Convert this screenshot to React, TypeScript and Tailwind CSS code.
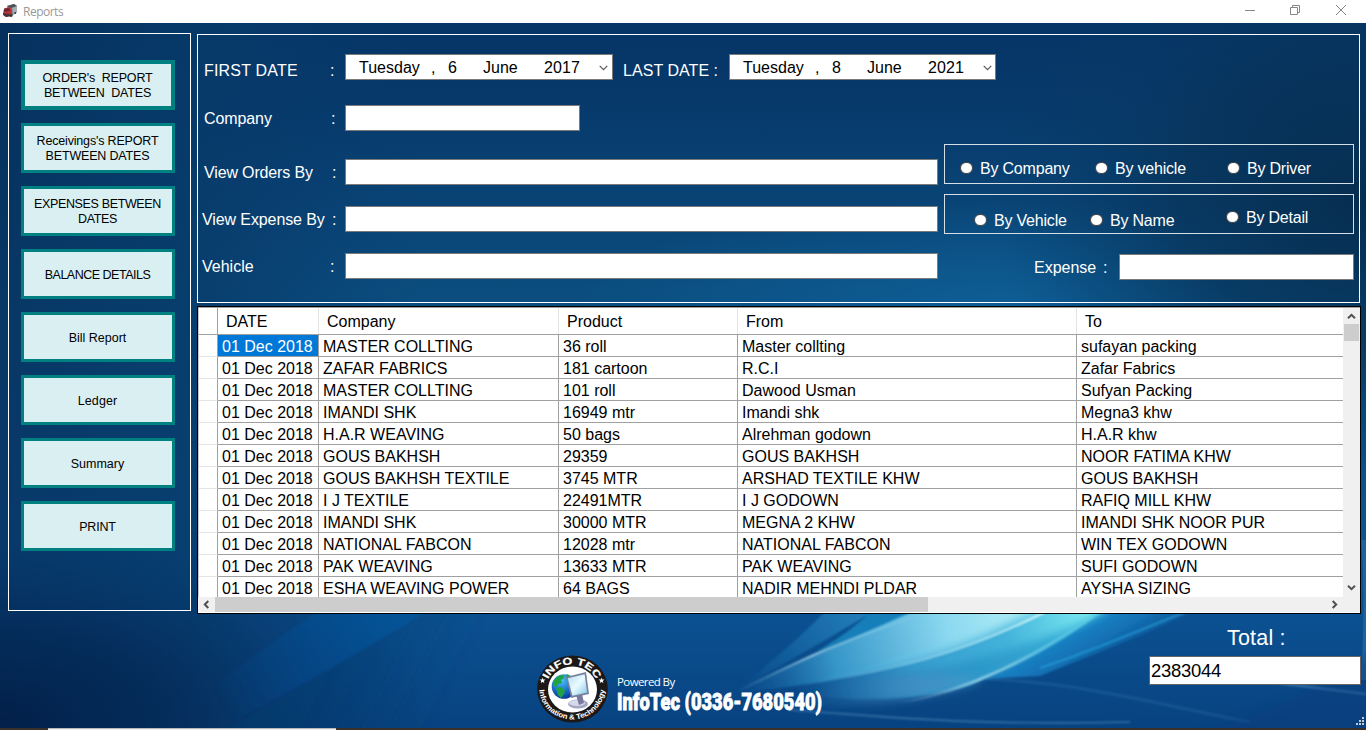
import React from "react";

const reports = [
  { name: "ORDER's  REPORT\nBETWEEN  DATES", tracking: "tracking-[-0.17px]" },
  { name: "Receivings's REPORT\nBETWEEN DATES", tracking: "tracking-[-0.17px]" },
  { name: "EXPENSES BETWEEN\nDATES", tracking: "tracking-[-0.35px]" },
  { name: "BALANCE DETAILS", tracking: "tracking-[-0.5px]" },
  { name: "Bill Report", tracking: "tracking-[0px]" },
  { name: "Ledger", tracking: "tracking-[0.1px]" },
  { name: "Summary", tracking: "tracking-[0px]" },
  { name: "PRINT", tracking: "tracking-[-0.2px]" },
];

const rows = [
  ["01 Dec 2018", "MASTER COLLTING", "36 roll", "Master collting", "sufayan packing"],
  ["01 Dec 2018", "ZAFAR FABRICS", "181 cartoon", "R.C.I", "Zafar Fabrics"],
  ["01 Dec 2018", "MASTER COLLTING", "101 roll", "Dawood Usman", "Sufyan Packing"],
  ["01 Dec 2018", "IMANDI SHK", "16949 mtr", "Imandi shk", "Megna3 khw"],
  ["01 Dec 2018", "H.A.R WEAVING", "50 bags", "Alrehman godown", "H.A.R khw"],
  ["01 Dec 2018", "GOUS BAKHSH", "29359", "GOUS BAKHSH", "NOOR FATIMA KHW"],
  ["01 Dec 2018", "GOUS BAKHSH TEXTILE", "3745 MTR", "ARSHAD TEXTILE KHW", "GOUS BAKHSH"],
  ["01 Dec 2018", "I J TEXTILE", "22491MTR", "I J GODOWN", "RAFIQ MILL KHW"],
  ["01 Dec 2018", "IMANDI SHK", "30000 MTR", "MEGNA 2 KHW", "IMANDI SHK NOOR PUR"],
  ["01 Dec 2018", "NATIONAL FABCON", "12028 mtr", "NATIONAL FABCON", "WIN TEX GODOWN"],
  ["01 Dec 2018", "PAK WEAVING", "13633 MTR", "PAK WEAVING", "SUFI GODOWN"],
  ["01 Dec 2018", "ESHA WEAVING POWER", "64 BAGS", "NADIR MEHNDI PLDAR", "AYSHA SIZING"],
];

const columns = "grid grid-cols-[19px_101px_240px_179px_339px_267px]";

function Backdrop() {
  return (
    <svg className="absolute inset-0 h-full w-full" viewBox="0 0 1366 730" preserveAspectRatio="none" aria-hidden="true">
      <defs>
        <linearGradient id="base" x1="0" y1="0" x2="0" y2="1">
          <stop offset="0" stopColor="#053464" />
          <stop offset="0.12" stopColor="#07386a" />
          <stop offset="0.4" stopColor="#0b4d7e" />
          <stop offset="0.8" stopColor="#0c5596" />
          <stop offset="1" stopColor="#084280" />
        </linearGradient>
        <linearGradient id="left" x1="0" y1="0" x2="1" y2="0">
          <stop offset="0" stopColor="#06305c" stopOpacity="0.75" />
          <stop offset="0.45" stopColor="#073a68" stopOpacity="0.8" />
          <stop offset="1" stopColor="#073a70" stopOpacity="0" />
        </linearGradient>
        <radialGradient id="corner" gradientUnits="userSpaceOnUse" cx="0" cy="0" r="1" gradientTransform="translate(0 720) scale(430 230)">
          <stop offset="0" stopColor="#02204a" />
          <stop offset="0.4" stopColor="#042b58" stopOpacity="0.85" />
          <stop offset="1" stopColor="#07407a" stopOpacity="0" />
        </radialGradient>
        <radialGradient id="rightdark" gradientUnits="userSpaceOnUse" cx="0" cy="0" r="1" gradientTransform="translate(1366 200) scale(370 280)">
          <stop offset="0" stopColor="#062d50" />
          <stop offset="0.5" stopColor="#073257" stopOpacity="0.7" />
          <stop offset="1" stopColor="#083b68" stopOpacity="0" />
        </radialGradient>
        <radialGradient id="mid" gradientUnits="userSpaceOnUse" cx="0" cy="0" r="1" gradientTransform="translate(1000 310) scale(430 110)">
          <stop offset="0" stopColor="#0e619a" stopOpacity="0.85" />
          <stop offset="1" stopColor="#0e619a" stopOpacity="0" />
        </radialGradient>
        <linearGradient id="ray" gradientUnits="userSpaceOnUse" x1="215" y1="700" x2="380" y2="612">
          <stop offset="0" stopColor="#0a509a" stopOpacity="0" />
          <stop offset="0.5" stopColor="#0a509a" stopOpacity="0.35" />
          <stop offset="1" stopColor="#0b5598" stopOpacity="0.6" />
        </linearGradient>
        <linearGradient id="shade" gradientUnits="userSpaceOnUse" x1="330" y1="665" x2="440" y2="720">
          <stop offset="0" stopColor="#073c6e" stopOpacity="0.4" />
          <stop offset="1" stopColor="#073c6e" stopOpacity="0" />
        </linearGradient>
        <linearGradient id="edge" gradientUnits="userSpaceOnUse" x1="740" y1="690" x2="870" y2="612">
          <stop offset="0" stopColor="#1f80bd" stopOpacity="0" />
          <stop offset="1" stopColor="#2a8cc4" stopOpacity="0.8" />
        </linearGradient>
        <linearGradient id="under" gradientUnits="userSpaceOnUse" x1="800" y1="690" x2="1090" y2="620">
          <stop offset="0" stopColor="#1a78b8" stopOpacity="0" />
          <stop offset="0.4" stopColor="#2f95ca" stopOpacity="0.9" />
          <stop offset="1" stopColor="#35b0d8" />
        </linearGradient>
        <linearGradient id="beam" gradientUnits="userSpaceOnUse" x1="740" y1="690" x2="1060" y2="612">
          <stop offset="0" stopColor="#1874b4" stopOpacity="0" />
          <stop offset="0.3" stopColor="#3fa4d4" stopOpacity="0.85" />
          <stop offset="0.65" stopColor="#8ad8f0" />
          <stop offset="1" stopColor="#c4f7f9" />
        </linearGradient>
        <linearGradient id="teal" gradientUnits="userSpaceOnUse" x1="780" y1="690" x2="1100" y2="612">
          <stop offset="0" stopColor="#2a86bf" stopOpacity="0" />
          <stop offset="0.4" stopColor="#3aa2d2" stopOpacity="0.7" />
          <stop offset="0.7" stopColor="#44b4dc" stopOpacity="0.9" />
          <stop offset="1" stopColor="#84f2f4" />
        </linearGradient>
        <linearGradient id="low" gradientUnits="userSpaceOnUse" x1="790" y1="700" x2="1000" y2="670">
          <stop offset="0" stopColor="#1d74b2" stopOpacity="0" />
          <stop offset="0.5" stopColor="#438fc3" stopOpacity="0.7" />
          <stop offset="1" stopColor="#4a9ccc" stopOpacity="0.7" />
        </linearGradient>
        <linearGradient id="cyan" gradientUnits="userSpaceOnUse" x1="1040" y1="640" x2="1075" y2="700">
          <stop offset="0" stopColor="#1c8bcb" />
          <stop offset="0.45" stopColor="#1880c4" stopOpacity="0.7" />
          <stop offset="1" stopColor="#0f5ca2" stopOpacity="0" />
        </linearGradient>
        <linearGradient id="shine" gradientUnits="userSpaceOnUse" x1="735" y1="0" x2="930" y2="0">
          <stop offset="0" stopColor="#6fb4dc" stopOpacity="0" />
          <stop offset="0.4" stopColor="#9ad4ec" />
          <stop offset="1" stopColor="#7fc8e6" stopOpacity="0.2" />
        </linearGradient>
        <linearGradient id="shine2" gradientUnits="userSpaceOnUse" x1="800" y1="0" x2="1045" y2="0">
          <stop offset="0" stopColor="#8ccfe9" stopOpacity="0" />
          <stop offset="1" stopColor="#d9fafb" />
        </linearGradient>
        <linearGradient id="shine3" gradientUnits="userSpaceOnUse" x1="900" y1="0" x2="1100" y2="0">
          <stop offset="0" stopColor="#8cc6e2" stopOpacity="0" />
          <stop offset="0.4" stopColor="#a4d8ec" stopOpacity="0.9" />
          <stop offset="1" stopColor="#5fd0ea" stopOpacity="0.4" />
        </linearGradient>
        <filter id="soft" x="-15%" y="-40%" width="130%" height="180%"><feGaussianBlur stdDeviation="5" /></filter>
        <filter id="fine" x="-10%" y="-20%" width="120%" height="140%"><feGaussianBlur stdDeviation="1" /></filter>
      </defs>
      <rect width="1366" height="730" fill="url(#base)" />
      <rect width="420" height="730" fill="url(#left)" />
      <rect y="490" width="560" height="240" fill="url(#corner)" />
      <ellipse cx="1000" cy="310" rx="430" ry="110" fill="url(#mid)" />
      <rect x="960" width="406" height="500" fill="url(#rightdark)" />
      <path d="M440 604Q325 672 225 730H440L600 604Z" fill="url(#shade)" filter="url(#fine)" />
      <path d="M190 705C240 665 280 636 330 604H438C370 648 300 685 220 730Z" fill="url(#ray)" filter="url(#fine)" />
      <path d="M735 692C765 665 805 636 835 600H892C840 633 775 668 735 692Z" fill="url(#edge)" filter="url(#fine)" />
      <path d="M815 653C835 640 865 622 880 600H960C900 622 855 638 815 653Z" fill="#1f93cb" opacity=".7" filter="url(#fine)" />
      <path d="M984 679C1030 661 1060 640 1080 600H1215C1170 625 1110 648 1040 676Z" fill="url(#cyan)" filter="url(#fine)" />
      <path d="M780 692C860 670 960 640 1040 600H1115C1070 638 1030 662 970 685C920 700 860 704 780 692Z" fill="url(#under)" filter="url(#fine)" />
      <path d="M738 691C790 668 845 640 940 600H1066C980 652 900 668 820 682C790 687 760 691 738 691Z" fill="url(#beam)" filter="url(#fine)" />
      <path d="M780 687C880 672 960 656 1050 600H1118C1080 632 1010 650 940 668C890 676 840 684 800 692Z" fill="url(#teal)" filter="url(#soft)" />
      <path d="M800 700C850 672 930 670 984 679C950 694 890 704 820 706Z" fill="url(#low)" filter="url(#soft)" />
      <path d="M738 691C790 666 840 640 930 612" fill="none" stroke="url(#shine)" strokeWidth="2.2" filter="url(#fine)" />
      <path d="M790 687C900 670 965 652 1045 612" fill="none" stroke="url(#shine2)" strokeWidth="2" filter="url(#fine)" />
      <path d="M900 703C970 690 1030 660 1100 612" fill="none" stroke="url(#shine3)" strokeWidth="2.5" filter="url(#fine)" />
      <path d="M1040 668C1090 652 1130 634 1195 608" fill="none" stroke="#27a2dc" strokeWidth="2" opacity=".7" filter="url(#fine)" />
      <path d="M984 679C1080 682 1160 705 1250 722" fill="none" stroke="#4a91c9" strokeWidth="3" opacity=".2" filter="url(#fine)" />
      <path d="M790 710C880 716 960 726 1130 722" fill="none" stroke="#67a8d4" strokeWidth="1.6" opacity=".45" filter="url(#fine)" />
      <path d="M1270 682L1366 694" fill="none" stroke="#5f9dce" strokeWidth="2" opacity=".6" filter="url(#fine)" />
      <path d="M1361 540Q1366 590 1361 680H1366V540Z" fill="#2b6aa5" opacity=".7" />
      <path d="M1180 740C1260 715 1320 690 1376 650V740Z" fill="#073a7c" opacity=".4" filter="url(#soft)" />
    </svg>
  );
}

function TruckIcon() {
  return (
    <svg width="15" height="14" viewBox="0 0 15 14" aria-hidden="true">
      <path d="M4 2 11 0l3 2v6l-5 4-3-5Z" fill="#737b80" />
      <path d="m4 2 7-2 3 2-6 2Z" fill="#4b5358" />
      <path d="m9 4 5-2v6l-4 3Z" fill="#a3adb2" />
      <path d="M1 4.5 6 3l3 2v7l-6 1-3-3Z" fill="#c2343a" />
      <path d="m1 5 4-1 2 1v2L1 8Z" fill="#6a2a33" />
      <path d="m0 9 7 1v2l-4 1-3-2Z" fill="#4a3335" />
      <circle cx="8" cy="11.5" r="1.5" fill="#33393d" />
      <circle cx="12.2" cy="9" r="1" fill="#33393d" />
    </svg>
  );
}

function Logo() {
  return (
    <svg width="72" height="68" viewBox="0 0 72 68" preserveAspectRatio="none" aria-label="Info Tec">
      <defs>
        <path id="arc-top" d="M10 34A26 24.5 0 0 1 62 34" />
        <path id="arc-bottom" d="M3.3 33A32.7 31.5 0 0 0 68.7 33" />
        <radialGradient id="globe" cx=".4" cy=".25" r=".8">
          <stop offset="0" stopColor="#4bc4f4" />
          <stop offset=".6" stopColor="#1769c8" />
          <stop offset="1" stopColor="#07318e" />
        </radialGradient>
        <linearGradient id="screen" x1="0" y1="0" x2="1" y2="1">
          <stop offset="0" stopColor="#b8dcf2" />
          <stop offset=".5" stopColor="#e8fbff" />
          <stop offset="1" stopColor="#81c6e6" />
        </linearGradient>
      </defs>
      <ellipse cx="36.5" cy="34" rx="35.3" ry="33.5" fill="#1b1817" />
      <ellipse cx="36.5" cy="34.5" rx="24.5" ry="23" fill="#fff" />
      <circle cx="28" cy="31.5" r="12.3" fill="url(#globe)" />
      <path d="M17 28c1-5 6-8 10-8l1 3-3 2 1 3-4 1-2 3-3-1Zm3 5 5-1 4 3-1 4-3 4-3-3Zm11-14 4 2-2 4-3-2Z" fill="#20a443" />
      <ellipse cx="42" cy="49" rx="10" ry="4.6" fill="#a5a7c2" />
      <ellipse cx="41" cy="48" rx="8" ry="3" fill="#d7d9ea" />
      <path d="m40 40 6-1 2 9-5 2Z" fill="#777a9d" />
      <path d="m30 22 20-5 3 22-18 4Z" fill="#77829e" />
      <path d="m31.8 23.3 16.8-4.1 2.5 18.3-14.7 3.3Z" fill="url(#screen)" />
      <g fill="#fff" fontFamily="Liberation Sans, sans-serif" fontWeight="700">
        <text fontSize="10" textAnchor="middle" stroke="#fff" strokeWidth="0.2">
          <textPath href="#arc-top" startOffset="50%" textLength="59" lengthAdjust="spacingAndGlyphs">INFO TEC</textPath>
        </text>
        <text fontSize="7.4" textAnchor="middle">
          <textPath href="#arc-bottom" startOffset="50%" textLength="97" lengthAdjust="spacingAndGlyphs">Information &amp; Technology</textPath>
        </text>
      </g>
      <path d="m6.500 22.500.8 2 2.200.1-1.700 1.400.6 2.100-1.900-1.200-1.800 1.200.6-2.100-1.700-1.400 2.200-.1Zm59 0 .8 2 2.200.1-1.700 1.400.6 2.100-1.900-1.200-1.800 1.200.6-2.100-1.700-1.400 2.200-.1Z" fill="#fff" />
    </svg>
  );
}

function Chevron({ className }: { className: string }) {
  return (
    <svg width="9" height="7" viewBox="0 0 9 7" className={className} aria-hidden="true">
      <path d="M1 5.3 4.5 1.8 8 5.3" fill="none" stroke="#505050" strokeWidth="2" />
    </svg>
  );
}

function DatePicker({ day, month, year, className }: { day: string; month: string; year: string; className: string }) {
  return (
    <div className={"flex h-[26px] items-center border border-[#7a7a7a] bg-white pl-[13px] text-black " + className}>
      <span className="w-[73px] pt-px">Tuesday</span>
      <span className="-ml-px w-[17px] pt-0.5">,</span>
      <span className="w-[35px] pt-px">{day}</span>
      <span className="w-[61px] pt-px">{month}</span>
      <span className="w-[55px] pt-px tracking-[0.1px]">{year}</span>
      <svg width="9" height="6" viewBox="0 0 9 6" className="mt-0.5" aria-hidden="true">
        <path d="M.7.8 4.5 4.6 8.3.8" fill="none" stroke="#555" strokeWidth="1.1" />
      </svg>
    </div>
  );
}

function Field({ label, labelClass, colonClass, inputClass, className }: { label: string; labelClass: string; colonClass: string; inputClass: string; className: string }) {
  return (
    <div className={"flex h-[26px] items-center " + className}>
      <span className={"pt-0.5 whitespace-nowrap " + labelClass}>{label}</span>
      <span className={"pt-0.5 " + colonClass}>:</span>
      <div className={"h-[26px] border border-[#7a7a7a] bg-white " + inputClass} />
    </div>
  );
}

function Radio({ label, className }: { label: string; className: string }) {
  return (
    <label className={"flex h-[20px] items-start tracking-[-0.2px] whitespace-nowrap " + className}>
      <span className="mt-[2.5px] mr-[7.5px] size-[12.5px] shrink-0 rounded-full border border-[#444] bg-white" />
      <span className="pt-px">{label}</span>
    </label>
  );
}

function Sidebar() {
  return (
    <aside className="flex h-[578px] w-[183px] shrink-0 flex-col gap-[13px] border border-white pt-[26px] pl-3">
      {reports.map(({ name, tracking }, i) => (
        <button
          key={name}
          className={
            "h-[50px] w-[154px] shrink-0 border-[#008080] bg-[#daeff2] pt-0.5 pr-px text-center text-[12.5px] leading-[15px] whitespace-pre text-black " +
            tracking +
            (i === 0 ? " border-4" : " border-3")
          }
        >
          {name}
        </button>
      ))}
    </aside>
  );
}

function Filters() {
  return (
    <section className="h-[269px] w-[1163px] border border-white text-[16px] leading-[18px]">
      <div className="mt-[19px] flex h-[26px] items-center">
        <span className="ml-1.5 w-[126px] pt-2 tracking-[0.2px]">FIRST DATE</span>
        <span className="w-[15px] pt-2">:</span>
        <DatePicker day="6" month="June" year="2017" className="w-[268px]" />
        <span className="ml-[10px] w-[106px] pt-2 tracking-[0.05px] whitespace-nowrap">LAST DATE :</span>
        <DatePicker day="8" month="June" year="2021" className="w-[267px]" />
      </div>
      <div className="flex">
        <div className="w-[740px]">
          <Field className="mt-[25px]" label="Company" labelClass="ml-1.5 w-[127px] tracking-[-0.1px]" colonClass="w-[14px]" inputClass="w-[235px]" />
          <Field className="mt-7" label="View Orders By" labelClass="ml-1.5 w-[128px] tracking-[-0.15px]" colonClass="w-[13px]" inputClass="w-[593px]" />
          <Field className="mt-[21px]" label="View Expense By" labelClass="ml-1 w-[130px] tracking-[-0.1px]" colonClass="w-[13px]" inputClass="w-[593px]" />
          <Field className="mt-[21px]" label="Vehicle" labelClass="ml-1 w-[128px]" colonClass="w-[15px]" inputClass="w-[593px]" />
        </div>
        <div className="mt-16 ml-1.5 w-[410px]">
          <div className="flex h-10 border border-[#d5dfe6] pt-[14px]">
            <Radio label="By Company" className="ml-[15px] w-[135px]" />
            <Radio label="By vehicle" className="w-[132px]" />
            <Radio label="By Driver" className="" />
          </div>
          <div className="mt-[10px] flex h-10 border border-[#d5dfe6] pt-[13px]">
            <Radio label="By Vehicle" className="mt-[3px] ml-[29px] w-[116px]" />
            <Radio label="By Name" className="mt-[3px] w-[136px]" />
            <Radio label="By Detail" className="" />
          </div>
          <Field className="mt-5" label="Expense" labelClass="ml-[90px] w-[69px]" colonClass="w-4" inputClass="w-[235px]" />
        </div>
      </div>
    </section>
  );
}

function DataGrid() {
  return (
    <section className="mt-[3px] flex h-[308px] w-[1164px] flex-col border border-black bg-[#f0f0f0] text-[16px] leading-[20px] text-black">
      <div className="flex h-[290px] border-t border-[#a0a0a0]">
        <div className="h-[289px] w-[1145px] overflow-hidden border-l border-[#c8c8c8] bg-white">
          <div className={columns + " h-[27px] border-b border-[#a0a0a0]"}>
            <div className="border-r border-[#a0a0a0]" />
            {["DATE", "Company", "Product", "From", "To"].map((h) => (
              <div key={h} className="border-r border-[#e5e5e5] pt-1 pl-2">{h}</div>
            ))}
          </div>
          {rows.map((row, r) => (
            <div key={r} className={columns + " h-[22px]"}>
              <div className="border-r border-b border-r-[#a0a0a0] border-b-[#e5e5e5]" />
              {row.map((cell, c) => (
                <div
                  key={c}
                  className={
                    "overflow-hidden border-r border-b border-[#a0a0a0] pl-1 whitespace-nowrap " +
                    (r === 0 && c === 0 ? "bg-[#0078d7] text-white" : "")
                  }
                >
                  <div className="h-5 overflow-hidden pt-0.5">{cell}</div>
                </div>
              ))}
            </div>
          ))}
        </div>
        <div className="flex w-[17px] flex-col items-center bg-[#f0f0f0]">
          <Chevron className="mt-[5px] h-[7px]" />
          <div className="mt-1 h-[17px] w-[15px] bg-[#cdcdcd]" />
          <div className="grow" />
          <Chevron className="mb-[6px] rotate-180" />
        </div>
      </div>
      <div className="flex h-4 items-center border-b border-white">
        <Chevron className="mr-[4px] ml-[4px] -rotate-90" />
        <div className="h-[15px] w-[713px] bg-[#cdcdcd]" />
        <div className="grow" />
        <Chevron className="mr-[21px] rotate-90" />
      </div>
    </section>
  );
}

export default function App() {
  return (
    <div className="relative flex h-[730px] w-[1366px] flex-col overflow-hidden bg-[#07386a] font-['Liberation_Sans',Arial,sans-serif] text-white">
      <Backdrop />
      <header className="relative flex h-[23px] shrink-0 items-center bg-white pl-[3px] text-[#999]">
        <div className="pb-0.5"><TruckIcon /></div>
        <span className="ml-[5px] grow pt-px font-['Open_Sans','Noto_Sans',sans-serif] text-[12px] leading-4 tracking-[-0.5px]">Reports</span>
        <svg width="104" height="12" viewBox="0 0 104 12" className="mr-[18px] mb-[3px]" fill="none" stroke="#888" aria-hidden="true">
          <path d="M1 6.500h10M46.500 3.500h7v7h-7zM48.500 3.500v-2h7v7h-2M92 1l10 10M102 1 92 11" />
        </svg>
      </header>
      <main className="relative flex h-[591px] shrink-0 pt-[10px] pl-2">
        <Sidebar />
        <div className="ml-1.5 flex flex-col pt-px">
          <Filters />
          <DataGrid />
        </div>
      </main>
      <footer className="relative flex h-[114px] shrink-0">
        <div className="mt-[41px] ml-[536px] h-[68px] w-[72px]"><Logo /></div>
        <div className="mt-[61px] ml-[9px] w-[532px]">
          <div className="font-['Open_Sans','Noto_Sans',sans-serif] text-[11.5px] leading-[14px] tracking-[-0.6px]">Powered By</div>
          <svg width="240" height="36" className="-mt-1 block overflow-visible" aria-label="InfoTec (0336-7680540)">
            <text x="0" y="25" fill="#fff" stroke="#fff" strokeWidth="0.8" fontFamily="Roboto, sans-serif" fontWeight="900" fontSize="23.5" textLength="205" lengthAdjust="spacingAndGlyphs">InfoTec (0336-7680540)</text>
          </svg>
        </div>
        <div className="flex w-[212px] flex-col">
          <div className="mt-[11px] ml-[78px] text-[21.5px] leading-[26px] tracking-[0.2px] whitespace-nowrap">Total :</div>
          <div className="mt-[5px] h-[29px] border border-[#666] bg-white pl-px text-[18.5px] leading-[28px] tracking-[-0.28px] text-black">2383044</div>
        </div>
        <svg width="10" height="10" viewBox="0 0 10 10" className="mt-[103px] -ml-[5px] shrink-0" fill="#c4cdd6" aria-hidden="true">
          <path d="M6 0h2v2H6zM3 3h2v2H3zM6 3h2v2H6zM0 6h2v2H0zM3 6h2v2H3zM6 6h2v2H6z" />
        </svg>
      </footer>
      <div className="relative flex h-0.5 shrink-0 bg-[#3a302a]">
        <div className="ml-12 h-0.5 w-72 border-t border-[#b8b8b8] bg-[#f0f0f0]" />
      </div>
    </div>
  );
}
